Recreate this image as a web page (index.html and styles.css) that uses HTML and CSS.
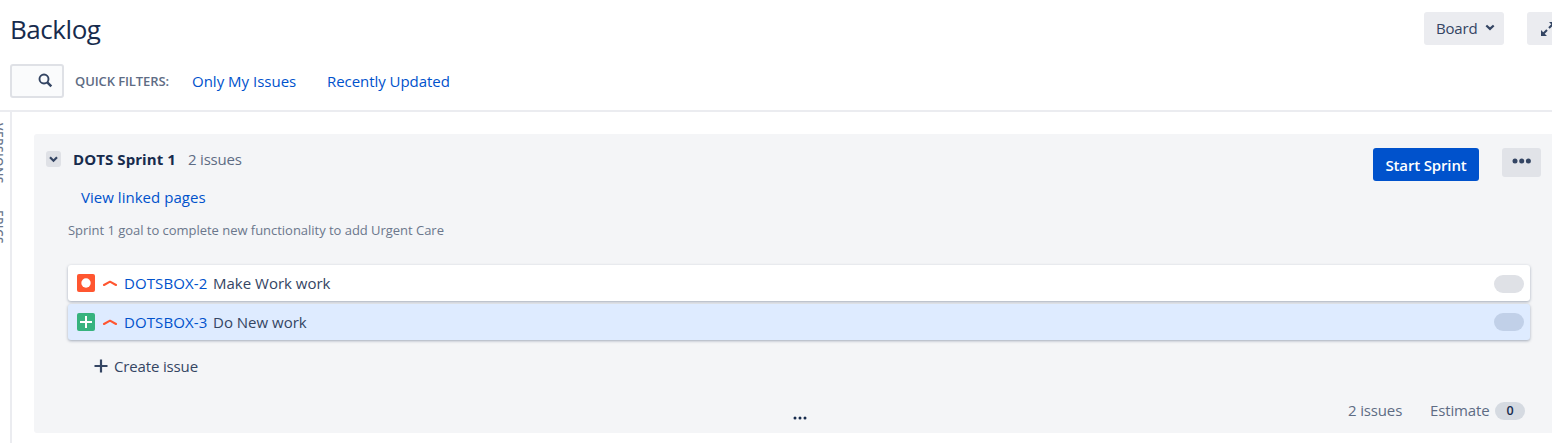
FILE: index.html
```html
<!DOCTYPE html>
<html lang="en">
<head>
<meta charset="utf-8">
<title>Backlog</title>
<link rel="stylesheet" href="styles.css">
</head>
<body>
<header class="header">
  <h1 class="title">Backlog</h1>
  <div class="header-actions">
    <button class="board-btn"><span class="board-label">Board</span><svg width="10" height="7" viewBox="0 0 10 7"><path d="M1.3 1.5 5 4.9 8.700 1.5" fill="none" stroke="#344563" stroke-width="2.2"/></svg></button>
    <button class="expand-btn"><svg width="18" height="18" viewBox="0 0 18 18" fill="none" stroke="#344563" stroke-width="2"><path d="M8 10 4 14M10 8 14 4"/><path d="M2 10v6h6zM16 8V2H10z" fill="#344563" stroke="none"/></svg></button>
  </div>
</header>
<nav class="filters">
  <div class="search"><svg width="15" height="15" viewBox="0 0 15 15" fill="none" stroke="#344563"><circle cx="6" cy="6" r="4.500" stroke-width="1.900"/><path d="M9.300 9.300 13.300 13.300" stroke-width="2.500"/></svg></div>
  <span class="filters-label">QUICK FILTERS:</span>
  <a class="link filter-mine">Only My Issues</a>
  <a class="link filter-recent">Recently Updated</a>
</nav>
<main class="main">
  <aside class="rail"><span class="rail-label versions">VERSIONS</span><span class="rail-label epics">EPICS</span></aside>
  <section class="sprint">
    <div class="sprint-head">
      <button class="toggle"><svg width="9" height="7" viewBox="0 0 9 7"><path d="M1 1.300 4.500 4.700 8 1.300" fill="none" stroke="#344563" stroke-width="2.200"/></svg></button>
      <h2 class="sprint-name">DOTS Sprint 1</h2>
      <span class="sprint-count">2 issues</span>
      <div class="sprint-actions">
        <button class="start">Start Sprint</button>
        <button class="more"><svg width="20" height="6" viewBox="0 0 20 6" fill="#344563"><circle cx="3" cy="3" r="2.500"/><circle cx="9.700" cy="3" r="2.500"/><circle cx="16.400" cy="3" r="2.500"/></svg></button>
      </div>
    </div>
    <a class="link linked">View linked pages</a>
    <p class="goal">Sprint 1 goal to complete new functionality to add Urgent Care</p>
    <div class="issues">
      <article class="issue">
        <svg class="type" width="18" height="18" viewBox="0 0 18 18"><rect width="18" height="18" rx="2" fill="#ff5630"/><circle cx="9" cy="9" r="4.700" fill="#fff"/></svg>
        <svg class="priority" width="16" height="8" viewBox="0 0 16 8"><path d="M2 6 8 2.700 14 6" fill="none" stroke="#ff5630" stroke-width="2.100" stroke-linecap="round" stroke-linejoin="round"/></svg>
        <a class="link key">DOTSBOX-2</a><span class="summary make">Make Work work</span><span class="badge empty"></span>
      </article>
      <article class="issue selected">
        <svg class="type" width="18" height="18" viewBox="0 0 18 18"><rect width="18" height="18" rx="2" fill="#36b37e"/><path d="M9 3v12M3 9h12" stroke="#fff" stroke-width="2"/></svg>
        <svg class="priority" width="16" height="8" viewBox="0 0 16 8"><path d="M2 6 8 2.700 14 6" fill="none" stroke="#ff5630" stroke-width="2.100" stroke-linecap="round" stroke-linejoin="round"/></svg>
        <a class="link key">DOTSBOX-3</a><span class="summary new">Do New work</span><span class="badge empty"></span>
      </article>
    </div>
    <button class="create"><svg width="14" height="14" viewBox="0 0 14 14"><path d="M7 .5v13M.5 7h13" stroke="#344563" stroke-width="2.200"/></svg><span class="create-label">Create issue</span></button>
    <footer class="sprint-foot">
      <svg class="dots" width="14" height="4" viewBox="0 0 14 4" fill="#172b4d"><circle cx="2" cy="2" r="1.500"/><circle cx="7" cy="2" r="1.500"/><circle cx="12" cy="2" r="1.500"/></svg>
      <span class="total">2 issues</span><span class="estimate">Estimate</span><span class="badge">0</span>
    </footer>
  </section>
</main>
</body>
</html>
```
FILE: styles.css
```css
* { box-sizing: border-box; }
body { margin: 0; width: 1552px; height: 443px; overflow: hidden; background: #fff; color: #344563; font: 15px/20px "Open Sans", sans-serif; white-space: nowrap; }
button { font: inherit; color: inherit; border: 0; padding: 0; border-radius: 3px; background: #ebecf0; display: flex; align-items: center; }
h1, h2, p { margin: 0; }
svg { display: block; flex: none; }
.link { color: #0052cc; letter-spacing: 0; }
.header { display: flex; justify-content: space-between; height: 58px; padding: 12px 0 0 10px; }
.title { color: #172b4d; font-size: 26px; font-weight: 400; line-height: 34px; letter-spacing: -0.45px; }
.header-actions { display: flex; gap: 23px; width: 128px; }
.board-btn { width: 80px; height: 33px; padding: 0 0 2px 12px; gap: 9px; flex: none; }
.board-label { width: 40px; letter-spacing: -0.2px; }
.expand-btn { width: 40px; height: 33px; padding-left: 12px; flex: none; }
.filters { display: flex; align-items: center; height: 54px; padding: 0 0 6px 10px; border-bottom: 2px solid #ebecf0; }
.search { width: 54px; height: 34px; border: 2px solid #dfe1e6; border-radius: 3px; background: #fafbfc; padding: 7px 0 0 26px; }
.filters-label { width: 117px; margin-left: 11px; color: #5e6c84; font-size: 13px; font-weight: 600; letter-spacing: -0.1px; }
.filter-mine { width: 135px; }
.filter-recent { letter-spacing: -0.05px; }
.main { display: flex; height: 331px; }
.rail { width: 12px; border-right: 2px solid #ebecf0; display: flex; flex-direction: column; gap: 23px; padding-top: 11px; overflow: hidden; }
.rail-label { writing-mode: vertical-rl; width: 16px; font-size: 12px; line-height: 16px; font-weight: 600; letter-spacing: 0.4px; color: #6b778c; margin-left: -10px; }
.versions { height: 64px; }
.sprint { width: 1518px; height: 299px; margin: 22px 0 0 22px; background: #f4f5f7; padding-top: 14px; border-radius: 3px 0 0 3px; }
.sprint-head { display: flex; height: 39px; padding-left: 12px; }
.toggle { width: 15px; height: 16px; margin-top: 3px; justify-content: center; background: #dfe1e6; }
.sprint-name { width: 115px; margin: 1px 0 0 12px; font-size: 15px; line-height: 20px; font-weight: 700; color: #172b4d; letter-spacing: 0.08px; }
.sprint-count { margin-top: 1px; color: #5e6c84; letter-spacing: -0.2px; }
.sprint-actions { display: flex; gap: 23px; margin: 0 11px 0 auto; }
.start { width: 106px; height: 33px; justify-content: center; background: #0052cc; color: #fff; font-weight: 600; letter-spacing: -0.15px; }
.more { width: 39px; height: 29px; padding-bottom: 3px; justify-content: center; background: #e1e3e8; }
.linked { display: block; margin-left: 47px; letter-spacing: 0.03px; }
.goal { margin: 13px 0 0 34px; color: #6b778c; font-size: 13px; letter-spacing: -0.03px; }
.issues { display: flex; flex-direction: column; gap: 3px; margin: 25px 22px 0 34px; }
.issue { display: flex; align-items: center; height: 36px; padding: 0 6px 0 9px; border-radius: 3px; background: #fff; box-shadow: 0 1px 3px rgba(9, 30, 66, .35); }
.selected { background: #deebff; }
.priority { margin: 0 7px; }
.key { width: 89px; margin-left: -1px; letter-spacing: 0.1px; }
.badge { display: block; width: 30px; height: 18px; border-radius: 9px; background: #d5dae1; color: #172b4d; font-size: 12.5px; line-height: 18px; font-weight: 600; text-align: center; }
.empty { margin: 1px 0 0 auto; background: #dfe1e6; }
.selected .badge { margin-top: 0; background: #c1d0e8; }
.create { margin: 16px 0 0 60px; gap: 6px; background: none; height: 20px; letter-spacing: -0.15px; }
.sprint-foot { display: flex; align-items: center; height: 20px; margin: 24px 27px 0 0; padding-left: 759px; color: #5e6c84; letter-spacing: -0.15px; }
.dots { margin-top: 16px; }
.total { margin-left: auto; width: 82px; }
.estimate { width: 65px; }
.sprint-foot .badge { margin-top: 1px; }
```
